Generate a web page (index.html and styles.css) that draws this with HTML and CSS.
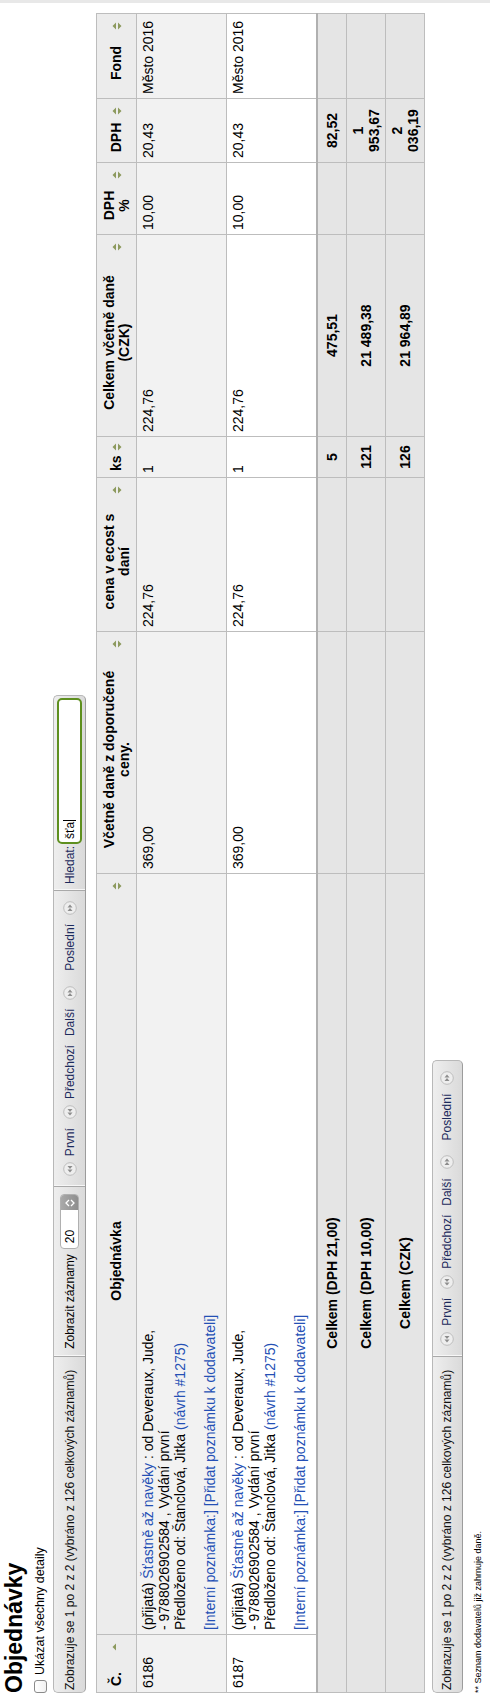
FILE: index.html
```html
<!DOCTYPE html>
<html lang="cs">
<head>
<meta charset="utf-8">
<title>Objednávky</title>
<link rel="stylesheet" href="styles.css">
</head>
<body>
<div class="frame">
<div class="page">
  <h1 class="title">Objednávky</h1>
  <label class="toggle"><span class="checkbox"></span><span>Ukázat všechny detaily</span></label>

  <div class="pager pager-top">
    <div class="seg info">Zobrazuje se 1 po 2 z 2 (vybráno z 126 celkových záznamů)</div>
    <div class="seg length">Zobrazit záznamy
      <span class="select"><span class="select-val">20</span><span class="select-arrow"><svg width="8" height="10" viewBox="0 0 8 10"><path d="M1 4 L4 1 L7 4" fill="none" stroke="#fff" stroke-width="1.3"/><path d="M1 6 L4 9 L7 6" fill="none" stroke="#fff" stroke-width="1.3"/></svg></span></span>
    </div>
    <div class="seg paging">
      <span class="nav"><svg class="navico" viewBox="0 0 14 14"><circle cx="7" cy="7" r="6.3" class="navc"/><path d="M3.5 7 L6.5 4.5 L6.5 9.5 Z M7 7 L10 4.5 L10 9.5 Z" fill="#8d8d8d"/></svg><span class="navlbl">První</span></span>
      <span class="nav"><svg class="navico" viewBox="0 0 14 14"><circle cx="7" cy="7" r="6.3" class="navc"/><path d="M3.5 7 L6.5 4.5 L6.5 9.5 Z M7 7 L10 4.5 L10 9.5 Z" fill="#8d8d8d"/></svg><span class="navlbl">Předchozí</span></span>
      <span class="nav nav-next"><span class="navlbl">Další</span><svg class="navico" viewBox="0 0 14 14"><circle cx="7" cy="7" r="6.3" class="navc"/><path d="M10.5 7 L7.5 4.5 L7.5 9.5 Z M7 7 L4 4.5 L4 9.5 Z" fill="#8d8d8d"/></svg></span>
      <span class="nav nav-last"><span class="navlbl">Poslední</span><svg class="navico" viewBox="0 0 14 14"><circle cx="7" cy="7" r="6.3" class="navc"/><path d="M10.5 7 L7.5 4.5 L7.5 9.5 Z M7 7 L4 4.5 L4 9.5 Z" fill="#8d8d8d"/></svg></span>
    </div>
    <div class="seg filter">Hledat: <span class="search">šťa<span class="caret"></span></span></div>
  </div>

  <table class="orders">
    <colgroup>
      <col class="c-no"><col class="c-order"><col class="c-rrp"><col class="c-price"><col class="c-qty"><col class="c-total"><col class="c-vatp"><col class="c-vat"><col class="c-fund">
    </colgroup>
    <thead>
      <tr>
        <th><div class="thi thi-left"><span class="lbl">Č.</span><svg class="sort" viewBox="0 0 8 10"><path d="M0.5 4 L4 0.5 L7.5 4 Z" fill="#8d9a5e"/></svg></div></th>
        <th><div class="thi"><span class="lbl">Objednávka</span><svg class="sort" viewBox="0 0 8 10"><path d="M0.5 4 L4 0.5 L7.5 4 Z M0.5 6 L4 9.5 L7.5 6 Z" fill="#8d9a5e"/></svg></div></th>
        <th><div class="thi"><span class="lbl">Včetně daně z doporučené<br>ceny.</span><svg class="sort" viewBox="0 0 8 10"><path d="M0.5 4 L4 0.5 L7.5 4 Z M0.5 6 L4 9.5 L7.5 6 Z" fill="#8d9a5e"/></svg></div></th>
        <th><div class="thi"><span class="lbl">cena v ecost s<br>daní</span><svg class="sort" viewBox="0 0 8 10"><path d="M0.5 4 L4 0.5 L7.5 4 Z M0.5 6 L4 9.5 L7.5 6 Z" fill="#8d9a5e"/></svg></div></th>
        <th><div class="thi"><span class="lbl">ks</span><svg class="sort" viewBox="0 0 8 10"><path d="M0.5 4 L4 0.5 L7.5 4 Z M0.5 6 L4 9.5 L7.5 6 Z" fill="#8d9a5e"/></svg></div></th>
        <th><div class="thi"><span class="lbl">Celkem včetně daně<br>(CZK)</span><svg class="sort" viewBox="0 0 8 10"><path d="M0.5 4 L4 0.5 L7.5 4 Z M0.5 6 L4 9.5 L7.5 6 Z" fill="#8d9a5e"/></svg></div></th>
        <th><div class="thi"><span class="lbl">DPH<br>%</span><svg class="sort" viewBox="0 0 8 10"><path d="M0.5 4 L4 0.5 L7.5 4 Z M0.5 6 L4 9.5 L7.5 6 Z" fill="#8d9a5e"/></svg></div></th>
        <th><div class="thi"><span class="lbl">DPH</span><svg class="sort" viewBox="0 0 8 10"><path d="M0.5 4 L4 0.5 L7.5 4 Z M0.5 6 L4 9.5 L7.5 6 Z" fill="#8d9a5e"/></svg></div></th>
        <th><div class="thi"><span class="lbl">Fond</span><svg class="sort" viewBox="0 0 8 10"><path d="M0.5 4 L4 0.5 L7.5 4 Z M0.5 6 L4 9.5 L7.5 6 Z" fill="#8d9a5e"/></svg></div></th>
      </tr>
    </thead>
    <tbody>
      <tr class="row odd">
        <td>6186</td>
        <td class="order">(přijatá) <a href="#">Šťastně až navěky</a> : od Deveraux, Jude,<br>- 9788026902584 , Vydání první<br>Předloženo od: Štanclová, Jitka <a href="#">(návrh #1275)</a><div class="notes"><a href="#">[Interní poznámka:]</a> <a href="#">[Přidat poznámku k dodavateli]</a></div></td>
        <td>369,00</td>
        <td>224,76</td>
        <td>1</td>
        <td>224,76</td>
        <td>10,00</td>
        <td>20,43</td>
        <td>Město 2016</td>
      </tr>
      <tr class="row even">
        <td>6187</td>
        <td class="order">(přijatá) <a href="#">Šťastně až navěky</a> : od Deveraux, Jude,<br>- 9788026902584 , Vydání první<br>Předloženo od: Štanclová, Jitka <a href="#">(návrh #1275)</a><div class="notes"><a href="#">[Interní poznámka:]</a> <a href="#">[Přidat poznámku k dodavateli]</a></div></td>
        <td>369,00</td>
        <td>224,76</td>
        <td>1</td>
        <td>224,76</td>
        <td>10,00</td>
        <td>20,43</td>
        <td>Město 2016</td>
      </tr>
    </tbody>
    <tfoot>
      <tr class="tot tot-first">
        <th colspan="2">Celkem (DPH 21,00)</th>
        <th></th><th></th>
        <th>5</th>
        <th>475,51</th>
        <th></th>
        <th>82,52</th>
        <th></th>
      </tr>
      <tr class="tot">
        <th colspan="2">Celkem (DPH 10,00)</th>
        <th></th><th></th>
        <th>121</th>
        <th>21 489,38</th>
        <th></th>
        <th>1 953,67</th>
        <th></th>
      </tr>
      <tr class="tot">
        <th colspan="2">Celkem (CZK)</th>
        <th></th><th></th>
        <th>126</th>
        <th>21 964,89</th>
        <th></th>
        <th>2 036,19</th>
        <th></th>
      </tr>
    </tfoot>
  </table>

  <div class="pager pager-bottom">
    <div class="seg info">Zobrazuje se 1 po 2 z 2 (vybráno z 126 celkových záznamů)</div>
    <div class="seg paging">
      <span class="nav"><svg class="navico" viewBox="0 0 14 14"><circle cx="7" cy="7" r="6.3" class="navc"/><path d="M3.5 7 L6.5 4.5 L6.5 9.5 Z M7 7 L10 4.5 L10 9.5 Z" fill="#8d8d8d"/></svg><span class="navlbl">První</span></span>
      <span class="nav"><svg class="navico" viewBox="0 0 14 14"><circle cx="7" cy="7" r="6.3" class="navc"/><path d="M3.5 7 L6.5 4.5 L6.5 9.5 Z M7 7 L10 4.5 L10 9.5 Z" fill="#8d8d8d"/></svg><span class="navlbl">Předchozí</span></span>
      <span class="nav nav-next"><span class="navlbl">Další</span><svg class="navico" viewBox="0 0 14 14"><circle cx="7" cy="7" r="6.3" class="navc"/><path d="M10.5 7 L7.5 4.5 L7.5 9.5 Z M7 7 L4 4.5 L4 9.5 Z" fill="#8d8d8d"/></svg></span>
      <span class="nav nav-last"><span class="navlbl">Poslední</span><svg class="navico" viewBox="0 0 14 14"><circle cx="7" cy="7" r="6.3" class="navc"/><path d="M10.5 7 L7.5 4.5 L7.5 9.5 Z M7 7 L4 4.5 L4 9.5 Z" fill="#8d8d8d"/></svg></span>
    </div>
  </div>

  <p class="note">** Seznam dodavatelů již zahrnuje daně.</p>
</div>
</div>
</body>
</html>
```

FILE: styles.css
```css
html, body {
  margin: 0;
  padding: 0;
  background: #fff;
}

.frame {
  width: 490px;
  height: 1695px;
  overflow: hidden;
}

.page {
  width: 1695px;
  height: 490px;
  box-sizing: border-box;
  padding: 0 0 0 2px;
  transform-origin: 0 0;
  transform: translateY(1695px) rotate(-90deg);
  font-family: "Liberation Sans", Arial, Helvetica, sans-serif;
  font-size: 12px;
  color: #000;
  background: #fff;
  border-right: 3px solid #e8e8e8;
}

.title {
  margin: 0;
  padding-top: 2px;
  font-size: 23px;
  line-height: 24px;
  font-weight: bold;
}

.toggle {
  display: flex;
  align-items: center;
  gap: 5px;
  height: 14px;
  margin-top: 7px;
  font-size: 12.5px;
}

.checkbox {
  width: 11px;
  height: 11px;
  border: 1px solid #8a8a8a;
  border-radius: 3px;
  background: linear-gradient(#ffffff, #f1f1f1);
}

.pager {
  display: flex;
  align-items: stretch;
  width: max-content;
  border: 1px solid #b8b8b8;
  border-bottom-color: #9c9c9c;
  border-radius: 5px;
  background: linear-gradient(#eeeeee, #dadada);
  box-sizing: border-box;
}

.pager-top {
  height: 33px;
  margin-top: 6px;
}

.pager-bottom {
  height: 31px;
  margin-top: 7px;
}

.seg {
  display: flex;
  align-items: center;
  padding: 0 7px;
}

.seg + .seg {
  border-left: 1px solid #a9a9a9;
  box-shadow: inset 1px 0 0 #f7f7f7;
}

.info {
  padding-left: 2px;
  padding-right: 13px;
  color: #111;
}

.length {
  gap: 5px;
}

.select {
  display: flex;
  width: 55px;
  height: 19px;
  box-sizing: border-box;
  border: 1px solid #b0b0b0;
  border-radius: 4px;
  background: #fff;
  overflow: hidden;
}

.select-val {
  flex: 1;
  display: flex;
  align-items: center;
  padding-left: 5px;
}

.select-arrow {
  width: 15px;
  display: flex;
  align-items: center;
  justify-content: center;
  background: linear-gradient(#a9a9a9, #8e8e8e);
}

.paging {
  padding-left: 10px;
  padding-right: 10px;
  gap: 9px;
}

.nav {
  display: flex;
  align-items: center;
  gap: 6px;
  color: #1c2a5c;
}

.nav-next {
  gap: 9px;
}

.nav-last {
  margin-left: 6px;
  gap: 9px;
}

.navico {
  width: 14px;
  height: 14px;
}

.navc {
  fill: #eeeeee;
  stroke: #bdbdbd;
  stroke-width: 1;
}

.filter {
  padding-left: 6px;
  padding-right: 2px;
  gap: 2px;
  color: #1c2a5c;
}

.search {
  display: flex;
  align-items: center;
  flex: none;
  width: 146px;
  height: 25px;
  box-sizing: border-box;
  border: 2px solid #5e8f1f;
  border-radius: 5px;
  background: #fff;
  padding-left: 3px;
  color: #000;
}

.caret {
  width: 1px;
  height: 13px;
  background: #000;
  margin-left: 1px;
}

.orders {
  margin-top: 10px;
  width: 1680px;
  table-layout: fixed;
  border-collapse: collapse;
  border: 1px solid #bdbdbd;
  font-size: 14px;
}

.c-no { width: 58px; }
.c-order { width: 761px; }
.c-rrp { width: 242px; }
.c-price { width: 154px; }
.c-qty { width: 41px; }
.c-total { width: 202px; }
.c-vatp { width: 72px; }
.c-vat { width: 64px; }
.c-fund { width: 85px; }

.orders th, .orders td {
  border: 1px solid #bdbdbd;
}

.orders thead th {
  height: 39px;
  padding: 0 8px 0 6px;
  background: #ececec;
  font-weight: bold;
  line-height: 15px;
}

.thi {
  display: grid;
  grid-template-columns: 1fr auto;
  align-items: center;
  gap: 4px;
}

.thi .lbl {
  text-align: center;
}

.thi-left .lbl {
  text-align: left;
}

.sort {
  width: 8px;
  height: 10px;
}

.orders td {
  vertical-align: top;
  padding: 3px 4px;
  line-height: 16px;
}

.row {
  height: 90px;
}

.odd td {
  background: #f2f2f2;
}

.even td {
  background: #fff;
}

.order a, .notes a {
  color: #2450b5;
  text-decoration: none;
}

.notes {
  margin-top: 14px;
}

.tot th {
  background: #e5e5e5;
  font-weight: bold;
  text-align: center;
  vertical-align: middle;
  padding: 3px 6px;
  line-height: 16px;
}

.tot-first th {
  border-top: 2px solid #b0b0b0;
  height: 22px;
}

.note {
  margin: 9px 0 0;
  font-size: 9px;
  line-height: 12px;
}
```
